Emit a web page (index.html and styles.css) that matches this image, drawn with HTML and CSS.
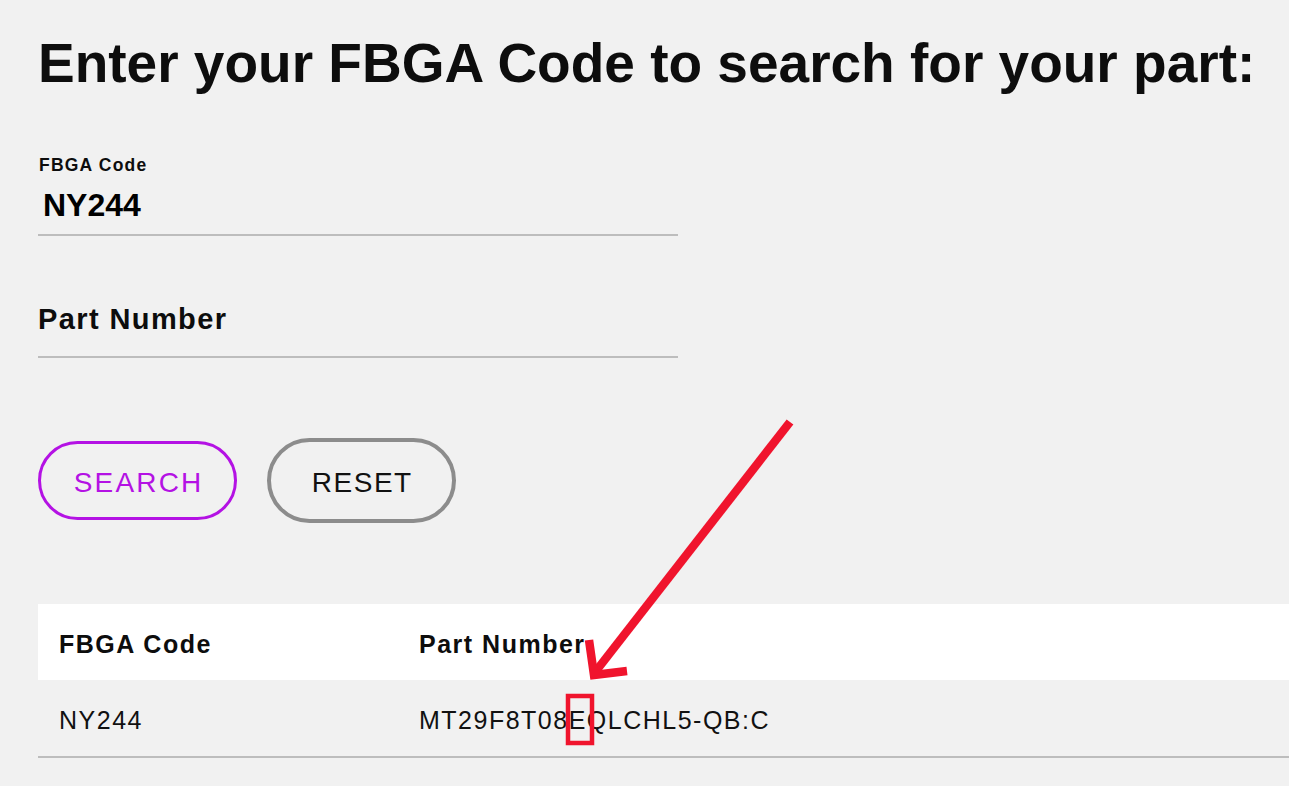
FILE: index.html
```html
<!DOCTYPE html>
<html lang="en">
<head>
<meta charset="utf-8">
<title>FBGA Code Search</title>
<link rel="stylesheet" href="styles.css">
</head>
<body>
<main class="page">
  <h1 class="title">Enter your FBGA Code to search for your part:</h1>
  <form class="search-form">
    <div class="field">
      <label class="field-label" for="fbga">FBGA Code</label>
      <input class="field-input" id="fbga" type="text" value="NY244">
    </div>
    <div class="field field--empty">
      <label class="field-label field-label--floating" for="part">Part Number</label>
      <input class="field-input" id="part" type="text">
    </div>
    <div class="actions">
      <button class="btn btn--search" type="button">SEARCH</button>
      <button class="btn btn--reset" type="button">RESET</button>
    </div>
  </form>
  <table class="results">
    <thead>
      <tr>
        <th class="col-code">FBGA Code</th>
        <th>Part Number</th>
      </tr>
    </thead>
    <tbody>
      <tr>
        <td class="col-code">NY244</td>
        <td>MT29F8T08EQLCHL5-QB:C</td>
      </tr>
    </tbody>
  </table>
</main>
<svg class="annotation" width="1289" height="786" viewBox="0 0 1289 786" aria-hidden="true">
  <line x1="790" y1="422" x2="596" y2="671" stroke="#f0142d" stroke-width="8.5"/>
  <polyline points="589,640 594,675 627,671" fill="none" stroke="#f0142d" stroke-width="8.5" stroke-linejoin="miter" stroke-miterlimit="10"/>
  <rect x="568" y="696" width="24" height="47" fill="none" stroke="#f0142d" stroke-width="4.5"/>
</svg>
</body>
</html>
```

FILE: styles.css
```css
* {
  box-sizing: border-box;
}

html, body {
  margin: 0;
  padding: 0;
}

body {
  background: #f1f1f1;
  color: #111;
  font-family: "Liberation Sans", Arial, sans-serif;
  overflow: hidden;
  width: 1289px;
  height: 786px;
}

.page {
  padding-left: 38px;
}

.title {
  margin: 31px 0 0;
  font-size: 55px;
  line-height: 64px;
  font-weight: 700;
  white-space: nowrap;
  color: #0d0d0d;
}

.search-form {
  margin-top: 60px;
  width: 640px;
}

.field {
  position: relative;
}

.field + .field {
  margin-top: 41px;
}

.field--empty {
  padding-top: 30px;
}

.field-label {
  display: block;
  font-size: 17.5px;
  line-height: 20px;
  font-weight: 700;
  letter-spacing: 1.2px;
  margin-bottom: 10px;
  color: #0d0d0d;
  padding-left: 1px;
}

.field-label--floating {
  position: absolute;
  left: 0;
  top: 22px;
  margin: 0;
  padding-left: 0;
  font-size: 29px;
  line-height: 40px;
  letter-spacing: 1.4px;
  pointer-events: none;
}

.field-input {
  display: block;
  width: 640px;
  height: 51px;
  margin: 0;
  padding: 0 0 9px 5px;
  border: none;
  border-bottom: 2px solid #bdbdbd;
  background: transparent;
  font-family: inherit;
  font-size: 32px;
  line-height: 40px;
  font-weight: 700;
  color: #000;
  outline: none;
  border-radius: 0;
}

.actions {
  margin-top: 80px;
  display: flex;
  align-items: center;
  gap: 30px;
}

.btn {
  display: flex;
  align-items: center;
  justify-content: center;
  padding: 4px 0 0 1.5px;
  background: transparent;
  border-radius: 999px;
  font-family: inherit;
  font-size: 28px;
  font-weight: 400;
  letter-spacing: 1.5px;
  line-height: 32px;
  cursor: pointer;
}

.btn--search {
  width: 199px;
  height: 79px;
  border: 3px solid #b412e4;
  color: #b412e4;
  letter-spacing: 2.2px;
  padding-left: 2.2px;
}

.btn--reset {
  width: 189px;
  height: 85px;
  border: 4px solid #8c8c8c;
  color: #111;
}

.results {
  margin-top: 81px;
  width: 1251px;
  border-collapse: separate;
  border-spacing: 0;
  table-layout: fixed;
}

.results th,
.results td {
  text-align: left;
  padding: 4px 21px 0;
  line-height: 72px;
  font-size: 25px;
  letter-spacing: 1.5px;
  white-space: nowrap;
}

.results th {
  background: #fff;
  font-weight: 700;
  color: #0d0d0d;
}

.results td {
  font-weight: 400;
  color: #111;
  border-bottom: 2px solid #bdbdbd;
}

.results .col-code {
  width: 360px;
}

.annotation {
  position: absolute;
  left: 0;
  top: 0;
  pointer-events: none;
}
```
